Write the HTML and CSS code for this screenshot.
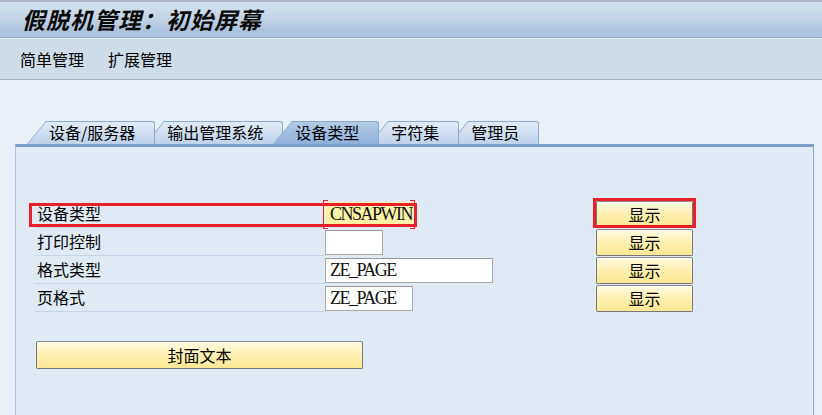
FILE: index.html
```html
<!DOCTYPE html>
<html lang="zh-CN">
<head>
<meta charset="utf-8">
<title>假脱机管理：初始屏幕</title>
<link rel="stylesheet" href="styles.css">
</head>
<body>
<div class="title">假脱机管理：初始屏幕</div>
<div class="menu"><span>简单管理</span><span>扩展管理</span></div>
<div class="content">
  <div class="tabs">
    <div class="tab z5">设备/服务器</div>
    <div class="tab z4">输出管理系统</div>
    <div class="tab active">设备类型</div>
    <div class="tab z2">字符集</div>
    <div class="tab z1">管理员</div>
  </div>
  <div class="panel">
    <div class="form">
      <div class="label hl">设备类型</div>
      <div class="cell"><div class="field focus w88"><span class="mono">CNSAPWIN</span><span class="caret"></span></div></div>
      <div class="cell"><button class="btn btn-hl">显示</button></div>

      <div class="label">打印控制</div>
      <div class="cell"><div class="field w58"></div></div>
      <div class="cell"><button class="btn">显示</button></div>

      <div class="label">格式类型</div>
      <div class="cell"><div class="field w168"><span class="mono">ZE_PAGE</span></div></div>
      <div class="cell"><button class="btn">显示</button></div>

      <div class="label">页格式</div>
      <div class="cell"><div class="field w88"><span class="mono">ZE_PAGE</span></div></div>
      <div class="cell"><button class="btn">显示</button></div>
    </div>
    <button class="btn wide">封面文本</button>
  </div>
</div>
</body>
</html>
```

FILE: styles.css
```css
html, body {
  margin: 0;
  padding: 0;
}
body {
  width: 822px;
  height: 415px;
  overflow: hidden;
  background: #e8eff7;
  font-family: "Noto Sans CJK SC", "Liberation Sans", sans-serif;
  font-size: 16px;
  color: #000;
}

.title {
  height: 35px;
  border-top: 2px solid #aab4c2;
  border-bottom: 1px solid #98a9bf;
  background: linear-gradient(#d6e4f0 0%, #c3d4e6 45%, #adc3dc 80%, #aec4dc 100%);
  padding-left: 22px;
  line-height: 35px;
  font-size: 23px;
  font-weight: bold;
  font-style: italic;
  letter-spacing: 1px;
  color: #0a0a0a;
}

.menu {
  height: 40px;
  border-top: 1px solid #e2eaf2;
  border-bottom: 1px solid #a3b1bf;
  background: #cedce7;
  padding-left: 20px;
  display: flex;
  gap: 24px;
  line-height: 40px;
  font-size: 16px;
}

.content {
  padding-top: 41px;
}

.tabs {
  display: flex;
  margin-left: 27px;
  height: 23px;
}
.tab {
  position: relative;
  isolation: isolate;
  height: 23px;
  line-height: 23px;
  padding: 0 20px 0 22px;
  margin-left: -10px;
  font-size: 16px;
  white-space: nowrap;
  --tab-top: #e1ebf6;
  --tab-bot: #bed2ea;
}
.tab:first-child {
  margin-left: 0;
}
.tab::before {
  content: "";
  position: absolute;
  left: 0;
  bottom: 0;
  width: 40px;
  height: 100%;
  box-sizing: border-box;
  transform-origin: 0 100%;
  transform: skewX(-39.6deg);
  background: linear-gradient(var(--tab-top), var(--tab-bot));
  border-left: 1px solid #8ca8ca;
  border-top: 1px solid #8ca8ca;
  z-index: -1;
}
.tab::after {
  content: "";
  position: absolute;
  left: 19px;
  right: 0;
  top: 0;
  bottom: 0;
  background: linear-gradient(var(--tab-top), var(--tab-bot));
  border-top: 1px solid #8ca8ca;
  border-right: 1px solid #8ca8ca;
  border-top-right-radius: 3px;
  z-index: -1;
}
.tab.active {
  z-index: 10;
  --tab-top: #b3cbe6;
  --tab-bot: #8db0da;
}
.z5 { z-index: 5; }
.z4 { z-index: 4; }
.z2 { z-index: 2; }
.z1 { z-index: 1; }

.panel {
  position: relative;
  z-index: 20;
  margin-left: 15px;
  width: 799px;
  height: 280px;
  box-sizing: border-box;
  border-top: 3px solid #7b9dc7;
  border-left: 1px solid #a9c0dc;
  border-right: 1px solid #8eabcb;
  background: #dfeaf5;
  padding: 53px 0 0 19px;
}

.form {
  display: grid;
  grid-template-columns: 290px 271px 97px;
  grid-auto-rows: 28px;
}
.label {
  position: relative;
  box-sizing: border-box;
  border-bottom: 1px solid #c6d4e3;
  padding-left: 2px;
  line-height: 27px;
  font-size: 16px;
}
.label.hl::after {
  content: "";
  position: absolute;
  left: -6px;
  top: 3px;
  width: 388px;
  height: 24px;
  box-sizing: border-box;
  border: 3px solid #e8202a;
  z-index: 3;
}
.cell {
  position: relative;
}

.field {
  position: relative;
  box-sizing: border-box;
  height: 25px;
  margin-top: 2px;
  border: 1px solid #a8a8a8;
  border-top-color: #9a9a9a;
  background: #fff;
  padding-left: 4px;
  line-height: 23px;
  white-space: nowrap;
}
.w58 { width: 58px; }
.w88 { width: 88px; }
.w168 { width: 168px; }

.field.focus {
  background: #fff1a6;
  border-color: #fff1a6;
}
.field.focus::before,
.field.focus::after {
  content: "";
  position: absolute;
  top: -3px;
  bottom: -3px;
  width: 4px;
  border-top: 1px solid #e8202a;
  border-bottom: 1px solid #e8202a;
}
.field.focus::before {
  left: -3px;
  border-left: 1px solid #e8202a;
}
.field.focus::after {
  right: -3px;
  border-right: 1px solid #e8202a;
}

.mono {
  font-family: "Liberation Serif", serif;
  font-size: 18px;
  letter-spacing: -1.5px;
  vertical-align: top;
  color: #111;
}
.caret {
  display: inline-block;
  width: 1px;
  height: 17px;
  margin-left: 2px;
  margin-top: 3px;
  vertical-align: top;
  background: #222;
}

.btn {
  display: block;
  position: relative;
  width: 97px;
  height: 27px;
  margin: 1px 0 0 0;
  padding: 0;
  box-sizing: border-box;
  border: 1px solid #777;
  border-top-color: #8a8a8a;
  border-radius: 2px;
  background: linear-gradient(#fffbe4 0%, #fff3bd 35%, #ffeda5 70%, #ffe795 100%);
  box-shadow: inset 0 1px 0 #fffdf2;
  font-family: "Noto Sans CJK SC", sans-serif;
  font-size: 16px;
  line-height: 25px;
  color: #000;
}
.btn-hl::after {
  content: "";
  position: absolute;
  left: -4px;
  right: -4px;
  top: -4px;
  bottom: -1px;
  border: 3px solid #e8202a;
}
.btn.wide {
  width: 327px;
  height: 28px;
  margin: 29px 0 0 1px;
  line-height: 26px;
}
```
